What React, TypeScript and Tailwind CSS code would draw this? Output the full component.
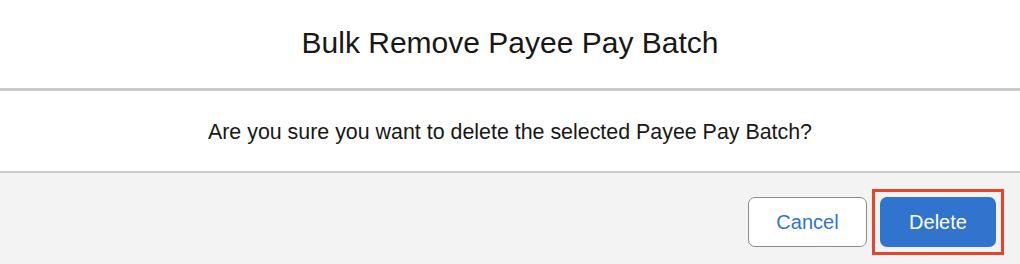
// Bulk remove confirmation modal

const font = { fontFamily: '"Liberation Sans", Arial, sans-serif' };

export default function App() {
  return (
    <div className="w-[1020px] h-[264px] bg-white flex flex-col overflow-hidden text-[#181818]" style={font}>
      <header className="h-[91px] shrink-0 flex items-center justify-center border-b-[3px] border-[#c9c9c9]">
        <h2 className="text-[30px] leading-none pb-[2px]">Bulk Remove Payee Pay Batch</h2>
      </header>

      <div className="h-[82px] shrink-0 flex items-center justify-center border-b-2 border-[#c9c9c9]">
        <p className="text-[21.4px] leading-none pt-[4px]">
          Are you sure you want to delete the selected Payee Pay Batch?
        </p>
      </div>

      <footer className="flex-1 bg-[#f3f3f3] flex justify-end items-start pt-[16px] pr-[16px] gap-[5px]">
        <button className="mt-[8px] w-[119px] h-[50px] rounded-[7px] border border-[#8c8c8c] bg-white text-[20px] text-[#2e74cf]">
          Cancel
        </button>
        <div className="border-[3px] border-[#e8442c] p-[5px]">
          <button className="block w-[116px] h-[50px] rounded-[7px] bg-[#3074cd] text-[20px] text-white">
            Delete
          </button>
        </div>
      </footer>
    </div>
  );
}
